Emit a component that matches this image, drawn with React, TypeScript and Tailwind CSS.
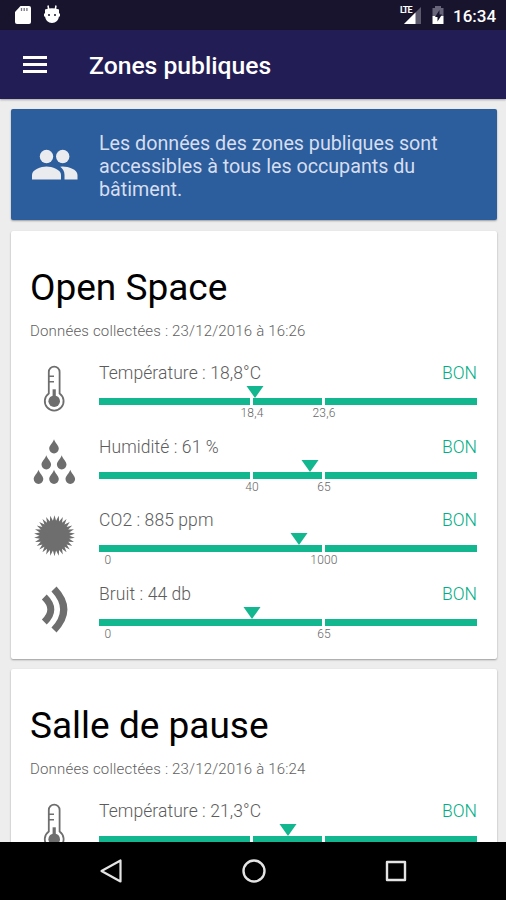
import React from 'react';

type Kind = 'temperature' | 'humidity' | 'co2' | 'noise';

interface Measure {
  kind: Kind;
  label: string;
  status: string;
  // marker position, in % of the gauge
  position: number;
  low?: string;
  high: string;
}

interface Zone {
  name: string;
  collectedAt: string;
  measures: Measure[];
}

const zones: Zone[] = [
  {
    name: 'Open Space',
    collectedAt: '23/12/2016 à 16:26',
    measures: [
      { kind: 'temperature', label: 'Température : 18,8°C', status: 'BON', position: 41.3, low: '18,4', high: '23,6' },
      { kind: 'humidity', label: 'Humidité : 61 %', status: 'BON', position: 55.7, low: '40', high: '65' },
      { kind: 'co2', label: 'CO2 : 885 ppm', status: 'BON', position: 52.8, high: '1000' },
      { kind: 'noise', label: 'Bruit : 44 db', status: 'BON', position: 40.4, high: '65' },
    ],
  },
  {
    name: 'Salle de pause',
    collectedAt: '23/12/2016 à 16:24',
    measures: [
      { kind: 'temperature', label: 'Température : 21,3°C', status: 'BON', position: 49.9, low: '', high: '' },
    ],
  },
];

const burst = Array.from({ length: 60 }, (_, i) => {
  const r = i % 2 === 0 ? 20.5 : 15;
  const a = (i * Math.PI) / 30 - Math.PI / 2;
  return `${(24.5 + r * Math.cos(a)).toFixed(2)},${(24.7 + r * Math.sin(a)).toFixed(2)}`;
}).join(' ');

const drops = [
  [24, 1],
  [16.3, 17],
  [31.7, 17],
  [8.5, 31.5],
  [24, 31.5],
  [40.3, 31.5],
];

const MeasureIcon: React.FC<{ kind: Kind }> = ({ kind }) => (
  <svg viewBox="0 0 48 48" className="h-12 w-12 shrink-0 text-[#6e6e6e]" fill="none">
    {kind === 'temperature' && (
      <>
        <path
          d="M18.8 29.5V8a5.4 5.4 0 0 1 10.8 0v21.5a9.4 9.4 0 1 1-10.8 0z"
          stroke="currentColor"
          strokeWidth="1.8"
        />
        <circle cx="24.2" cy="37.2" r="5.8" fill="currentColor" />
        <path d="M24.2 36V25.3" stroke="currentColor" strokeWidth="3.2" />
        <path d="M19 12.3h5M19 17.8h5" stroke="currentColor" strokeWidth="1.4" />
      </>
    )}
    {kind === 'humidity' &&
      drops.map(([x, y]) => (
        <path
          key={`${x}-${y}`}
          transform={`translate(${x} ${y + 0.2})`}
          d="M0 0C1 3.400 4.800 6.300 4.800 9.400a4.800 4.800 0 0 1-9.600 0C-4.800 6.300-1 3.400 0 0z"
          fill="currentColor"
        />
      ))}
    {kind === 'co2' && <polygon points={burst} fill="currentColor" />}
    {kind === 'noise' && (
      <path d="M14.3 12q13 12.500 0 25M24 4q19.500 20.500 0 41" stroke="currentColor" strokeWidth="7" />
    )}
  </svg>
);

const Gauge: React.FC<{ measure: Measure }> = ({ measure }) => (
  <div className="relative mt-[14px]">
    <svg
      viewBox="0 0 18 12"
      className="absolute -top-[12px] h-3 w-[18px] -translate-x-1/2 text-[#12b68f]"
      style={{ left: `${measure.position}%` }}
    >
      <path d="M.5 0h17L9 12z" fill="currentColor" />
    </svg>
    <div className="flex h-[7px] gap-[3px]">
      {measure.low !== undefined ? (
        <>
          <div className="w-[151px] bg-[#12b68f]" />
          <div className="w-[69px] bg-[#12b68f]" />
        </>
      ) : (
        <div className="w-[223px] bg-[#12b68f]" />
      )}
      <div className="flex-1 bg-[#12b68f]" />
    </div>
    <div className="flex pt-px text-center text-xs leading-[14px] font-light tracking-[0.2px] text-[#666]">
      {measure.low !== undefined ? (
        <span className="ml-[123px] w-[60px]">{measure.low}</span>
      ) : (
        <span className="mr-[168px] ml-[3px] w-3">0</span>
      )}
      <span className="ml-3 w-[60px]">{measure.high}</span>
    </div>
  </div>
);

const MeasureRow: React.FC<{ measure: Measure }> = ({ measure }) => (
  <div className="flex h-[73.5px]">
    <div className="w-[69px] pt-[3px]">
      <MeasureIcon kind={measure.kind} />
    </div>
    <div className="w-[378px] pt-px">
      <div className="flex justify-between text-[17.5px] leading-[22px] font-light">
        <span className="tracking-[0.08px] text-[#5c5c5c]">{measure.label}</span>
        <span className="text-[#00ae84]">{measure.status}</span>
      </div>
      <Gauge measure={measure} />
    </div>
  </div>
);

const ZoneCard: React.FC<{ zone: Zone }> = ({ zone }) => (
  <section className="h-[428px] shrink-0 rounded-[2px] bg-white pt-[33px] pl-[19px] shadow-[0_1px_2px_rgba(0,0,0,0.35)]">
    <h2 className="pt-px text-[37px] leading-[45px] text-black">{zone.name}</h2>
    <p className="mt-[11px] mb-[20px] text-[15px] leading-[20px] font-light tracking-[0.18px] text-[#5f5f5f]">
      Données collectées : {zone.collectedAt}
    </p>
    {zone.measures.map((m) => (
      <MeasureRow key={m.kind} measure={m} />
    ))}
  </section>
);

const StatusBar = () => (
  <div className="flex h-[30px] shrink-0 items-center bg-[#19142d] pr-[9px] pl-[14px] text-white">
    <svg viewBox="0 0 18 20" className="h-5 w-[18px]">
      <path d="M6.5 1H15a2 2 0 0 1 2 2v14a2 2 0 0 1-2 2H3a2 2 0 0 1-2-2V7z" fill="currentColor" />
      <path d="M7.5 3v3M10.2 3v3M12.9 3v3" stroke="#77737f" strokeWidth="1.3" />
    </svg>
    <svg viewBox="0 0 18 20" className="ml-[11px] h-5 w-[18px]">
      <path d="M5 .5l.7 4M13 .5l-.7 4" stroke="currentColor" strokeWidth="1.5" />
      <path d="M2 4.5Q9 2 16 4.5V8.5h1v3h-1q-1 6.5-7 6.5T2 11.5H1v-3h1z" fill="currentColor" />
      <circle cx="6" cy="10" r="1" fill="#19142d" />
      <circle cx="12" cy="10" r="1" fill="#19142d" />
    </svg>
    <div className="relative ml-auto h-5 w-[22px]">
      <svg viewBox="0 0 22 20" className="h-5 w-[22px]">
        <path d="M21 2v17H4z" fill="#5d596c" />
        <path d="M15.5 7.5V19H4z" fill="currentColor" />
      </svg>
      <span className="absolute top-[1px] left-0 text-[9px] leading-[9px] font-bold tracking-[-1px]">LTE</span>
    </div>
    <svg viewBox="0 0 14 20" className="ml-[9px] h-5 w-[14px]">
      <path d="M4 1h6v2h2.5v8h-11V3H4z" fill="#68647a" />
      <path d="M1.5 11h11v8h-11z" fill="currentColor" />
      <path d="M8.5 5L4 12h2.5v4.5L11 9.5H8.5z" fill="#19142d" />
    </svg>
    <span className="ml-[8px] w-[44px] pt-px text-[17px] leading-5 font-medium">16:34</span>
  </div>
);

const NavBar = () => (
  <nav className="flex h-[58px] shrink-0 items-center justify-center gap-[118px] bg-black pl-[2px] text-[#e4e4e4]">
    <svg viewBox="0 0 24 24" className="h-6 w-6" fill="none" stroke="currentColor" strokeWidth="2.2" strokeLinejoin="round">
      <path d="M20.5 1.500v21L1.500 12z" />
    </svg>
    <svg viewBox="0 0 24 24" className="h-6 w-6" fill="none" stroke="currentColor" strokeWidth="2.4">
      <circle cx="12" cy="12" r="10.5" />
    </svg>
    <svg viewBox="0 0 24 24" className="h-6 w-6" fill="none" stroke="currentColor" strokeWidth="2.4" strokeLinejoin="round">
      <path d="M3 3h18v18H3z" />
    </svg>
  </nav>
);

export default function App() {
  return (
    <div className="flex h-[900px] w-[506px] flex-col overflow-hidden bg-[#ededed] font-['Roboto',sans-serif]">
      <StatusBar />
      <header className="z-10 flex h-[69px] shrink-0 items-center bg-[#231d56] pl-[23px] text-white shadow-[0_1px_2px_rgba(0,0,0,0.3)]">
        <svg viewBox="0 0 24 18" className="h-[18px] w-6" stroke="currentColor" strokeWidth="3">
          <path d="M0 1.5h24M0 8.5h24M0 15.5h24" />
        </svg>
        <h1 className="ml-[42px] pt-[2px] text-[24.7px] leading-8 font-medium">Zones publiques</h1>
      </header>

      <main className="flex min-h-0 flex-1 flex-col gap-[10px] overflow-hidden pt-[10px] pr-[9px] pl-[11px]">
        <div className="mb-px flex h-[111px] shrink-0 items-center rounded-[2px] bg-[#2c5d9c] pl-5 shadow-[0_1px_2px_rgba(0,0,0,0.35)]">
          <svg viewBox="0 0 48 32" className="h-8 w-12 text-[#e9ebee]" fill="currentColor">
            <circle cx="15.5" cy="7.5" r="6.7" />
            <circle cx="31.7" cy="7.5" r="6.7" />
            <path d="M1 30.5v-4.5C1 20.5 10 17.5 15.5 17.5S30 20.5 30 26v4.5z" />
            <path d="M31.5 17.6C37 17.5 46.5 20.5 46.5 26v4.5H33.5V26c0-3.800-2-6.600-4.300-8.200z" />
          </svg>
          <p className="ml-5 w-[360px] pt-[3px] text-[19.7px] leading-[23px] text-[#d6def0]">
            Les données des zones publiques sont accessibles à tous les occupants du bâtiment.
          </p>
        </div>
        {zones.map((zone) => (
          <ZoneCard key={zone.name} zone={zone} />
        ))}
      </main>

      <NavBar />
    </div>
  );
}
